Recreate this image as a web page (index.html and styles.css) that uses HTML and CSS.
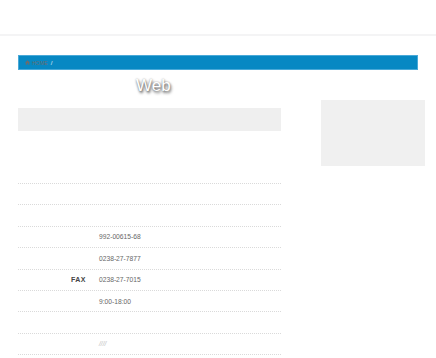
FILE: index.html
```html
<!DOCTYPE html>
<html>
<head>
<meta charset="utf-8">
<link rel="stylesheet" href="styles.css">
</head>
<body>
<header class="site-header"></header>
<main class="wrap">
  <nav class="crumbs">
    <svg class="home-ico" width="5" height="5" viewBox="0 0 10 10"><path d="M5 0.5 L0 5 H1.5 V9.5 H4 V6.5 H6 V9.5 H8.5 V5 H10 Z" fill="#6c6c6c"/></svg>
    <span class="crumb-home">HOME</span>
    <span class="crumb-sep">/</span>
  </nav>
  <div class="cols">
    <section class="main-col">
      <h1 class="page-title">Web</h1>
      <div class="lead-box"></div>
      <div class="info">
        <div class="row"><div class="lbl"></div><div class="val"></div></div>
        <div class="row"><div class="lbl"></div><div class="val"></div></div>
        <div class="row"><div class="lbl"></div><div class="val">992-00615-68</div></div>
        <div class="row"><div class="lbl"></div><div class="val">0238-27-7877</div></div>
        <div class="row"><div class="lbl">FAX</div><div class="val">0238-27-7015</div></div>
        <div class="row"><div class="lbl"></div><div class="val">9:00-18:00</div></div>
        <div class="row"><div class="lbl"></div><div class="val"></div></div>
        <div class="row"><div class="lbl"></div><div class="val faint">////</div></div>
      </div>
    </section>
    <aside class="side">
      <div class="side-box"></div>
    </aside>
  </div>
</main>
</body>
</html>
```
FILE: styles.css
```css
html, body {
  margin: 0;
  padding: 0;
  background: #fff;
  font-family: "Liberation Sans", Arial, sans-serif;
}
.site-header {
  height: 34px;
  border-bottom: 2px solid #f4f4f5;
}
.wrap {
  margin: 19px 18px 0 18px;
  width: 400px;
}
.crumbs {
  height: 13px;
  background: #0788c3;
  border: 1px solid #49a9d8;
  display: flex;
  align-items: center;
  padding-left: 6px;
  gap: 2px;
  font-size: 5px;
}
.home-ico { display: block; }
.crumb-home { color: #6c6c6c; letter-spacing: 0.2px; }
.crumb-sep { color: #e8f4fb; font-size: 6px; margin-left: 1px; }
.cols {
  display: flex;
  align-items: flex-start;
}
.main-col {
  width: 263px;
  flex: none;
}
.page-title {
  margin: 5px 0 0 0;
  padding-left: 118px;
  font-size: 17px;
  line-height: 22px;
  font-weight: normal;
  color: #fff;
  text-shadow: 1px 2px 3px rgba(0,0,0,0.65), 0 0 2px rgba(0,0,0,0.4);
}
.lead-box {
  margin-top: 11px;
  height: 23px;
  background: #efefef;
}
.info {
  margin-top: 52px;
  border-top: 1px dotted #dadada;
}
.row {
  display: flex;
  align-items: center;
  height: 20.4px;
  border-bottom: 1px dotted #dadada;
  font-size: 6.7px;
  color: #666;
}
.lbl {
  width: 76px;
  box-sizing: border-box;
  padding-right: 8px;
  text-align: right;
  font-weight: bold;
  font-size: 7px;
  letter-spacing: 0.5px;
  color: #444;
  flex: none;
}
.val {
  padding-left: 5px;
}
.faint {
  color: #bbb;
  font-style: italic;
}
.side {
  margin-left: 40px;
  margin-top: 30px;
}
.side-box {
  width: 104px;
  height: 66px;
  background: #f0f0f0;
}
```
